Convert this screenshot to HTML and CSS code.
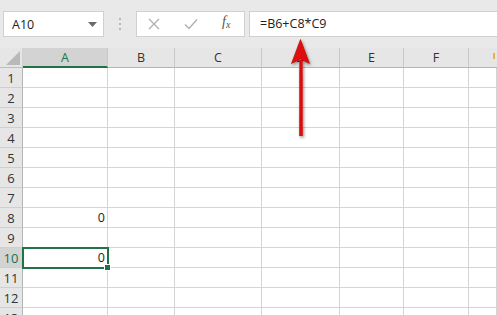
FILE: index.html
```html
<!DOCTYPE html>
<html>
<head>
<meta charset="utf-8">
<link rel="stylesheet" href="styles.css">
</head>
<body>
<div class="app">
  <div class="toolbar">
    <div class="namebox">
      <span class="name">A10</span>
      <svg class="caret" width="9" height="5" viewBox="0 0 9 5"><path d="M0 0H9L4.5 5Z" fill="#6a6a6a"/></svg>
    </div>
    <div class="dots"><i></i><i></i><i></i></div>
    <div class="fxbox">
      <svg class="ico" width="12" height="12" viewBox="0 0 12 12"><path d="M1 1L11 11M11 1L1 11" stroke="#b0b0b0" stroke-width="1.3"/></svg>
      <svg class="ico" width="14" height="12" viewBox="0 0 14 12"><path d="M1 6.5L5 10.5L13 1.5" stroke="#b0b0b0" stroke-width="1.4" fill="none"/></svg>
      <span class="fx">f<sub>x</sub></span>
    </div>
    <div class="formula">=B6+C8*C9</div>
  </div>
  <div class="sheet">
    <div class="corner"><svg width="14" height="14" viewBox="0 0 14 14"><path d="M14 0V14H0Z" fill="#b9b9b9"/></svg></div>
    <div class="ch sel">A</div><div class="ch">B</div><div class="ch">C</div><div class="ch">D</div><div class="ch">E</div><div class="ch">F</div><div class="ch last"><span class="tick"></span></div>

    <div class="rh">1</div><div class="c"></div><div class="c"></div><div class="c"></div><div class="c"></div><div class="c"></div><div class="c"></div><div class="c"></div>
    <div class="rh">2</div><div class="c"></div><div class="c"></div><div class="c"></div><div class="c"></div><div class="c"></div><div class="c"></div><div class="c"></div>
    <div class="rh">3</div><div class="c"></div><div class="c"></div><div class="c"></div><div class="c"></div><div class="c"></div><div class="c"></div><div class="c"></div>
    <div class="rh">4</div><div class="c"></div><div class="c"></div><div class="c"></div><div class="c"></div><div class="c"></div><div class="c"></div><div class="c"></div>
    <div class="rh">5</div><div class="c"></div><div class="c"></div><div class="c"></div><div class="c"></div><div class="c"></div><div class="c"></div><div class="c"></div>
    <div class="rh">6</div><div class="c"></div><div class="c"></div><div class="c"></div><div class="c"></div><div class="c"></div><div class="c"></div><div class="c"></div>
    <div class="rh">7</div><div class="c"></div><div class="c"></div><div class="c"></div><div class="c"></div><div class="c"></div><div class="c"></div><div class="c"></div>
    <div class="rh">8</div><div class="c num">0</div><div class="c"></div><div class="c"></div><div class="c"></div><div class="c"></div><div class="c"></div><div class="c"></div>
    <div class="rh">9</div><div class="c"></div><div class="c"></div><div class="c"></div><div class="c"></div><div class="c"></div><div class="c"></div><div class="c"></div>
    <div class="rh selr">10</div><div class="c num active">0<span class="handle"></span></div><div class="c"></div><div class="c"></div><div class="c"></div><div class="c"></div><div class="c"></div><div class="c"></div>
    <div class="rh">11</div><div class="c"></div><div class="c"></div><div class="c"></div><div class="c"></div><div class="c"></div><div class="c"></div><div class="c"></div>
    <div class="rh">12</div><div class="c"></div><div class="c"></div><div class="c"></div><div class="c"></div><div class="c"></div><div class="c"></div><div class="c"></div>
    <div class="rh">13</div><div class="c"></div><div class="c"></div><div class="c"></div><div class="c"></div><div class="c"></div><div class="c"></div><div class="c"></div>
  </div>
  <svg class="arrow" width="30" height="110" viewBox="0 0 30 110">
    <defs>
      <filter id="sh" x="-50%" y="-20%" width="200%" height="140%">
        <feDropShadow dx="1" dy="1.5" stdDeviation="1.5" flood-color="#000" flood-opacity="0.45"/>
      </filter>
    </defs>
    <g filter="url(#sh)">
      <path d="M13.3 22 L16.7 22 L16.8 98 L13.2 98 Z" fill="#d80c0c"/>
      <path d="M14.5 1.5 L23.5 25.5 L14.5 21 L5.5 25.5 Z" fill="#e01010" stroke="#b50000" stroke-width="0.6"/>
    </g>
  </svg>
</div>
</body>
</html>
```

FILE: styles.css
```css
html, body {
  margin: 0;
  padding: 0;
}
body {
  width: 497px;
  height: 315px;
  overflow: hidden;
  background: #ffffff;
  font-family: "Open Sans", "Noto Sans", sans-serif;
}
.app {
  position: relative;
  width: 497px;
  height: 315px;
  overflow: hidden;
}
.toolbar {
  height: 48px;
  box-sizing: border-box;
  padding-top: 11px;
  background: #e9e9e9;
  display: flex;
  align-items: flex-start;
}
.namebox {
  margin-left: 3px;
  width: 101px;
  height: 26px;
  box-sizing: border-box;
  background: #fff;
  border: 1px solid #d0d0d0;
  display: flex;
  align-items: center;
  justify-content: space-between;
  padding: 0 6px 0 8px;
}
.name {
  font-size: 12.5px;
  color: #222;
}
.caret {
  display: block;
  margin-top: 1px;
}
.dots {
  width: 32px;
  height: 26px;
  display: flex;
  flex-direction: column;
  align-items: center;
  justify-content: center;
  gap: 3px;
}
.dots i {
  display: block;
  width: 2px;
  height: 2px;
  background: #b5b5b5;
}
.fxbox {
  width: 109px;
  height: 26px;
  box-sizing: border-box;
  background: #fff;
  border: 1px solid #d0d0d0;
  display: flex;
  align-items: center;
  padding-left: 11px;
}
.fxbox .ico:first-child {
  margin-right: 24px;
}
.fxbox .ico:nth-child(2) {
  margin-right: 24px;
}
.fx {
  font-family: "Liberation Serif", serif;
  font-style: italic;
  font-size: 14px;
  color: #555;
  line-height: 1;
  margin-top: -3px;
}
.fx sub {
  font-size: 10px;
  vertical-align: -2px;
}
.formula {
  margin-left: 4px;
  flex: 1;
  height: 26px;
  box-sizing: border-box;
  background: #fff;
  border: 1px solid #d0d0d0;
  border-right: none;
  padding-left: 10px;
  font-size: 12.5px;
  line-height: 24px;
  color: #222;
}
.sheet {
  display: grid;
  grid-template-columns: 23px 85px 67px 87px 78px 64px 65px 28px;
  grid-auto-rows: 20px;
  background: #fff;
}
.corner {
  background: #e6e6e6;
  border-right: 1px solid #d0d0d0;
  border-bottom: 1px solid #bdbdbd;
  display: flex;
  align-items: flex-end;
  justify-content: flex-end;
  padding: 0 2px 2px 0;
  box-sizing: border-box;
}
.corner svg {
  display: block;
}
.ch {
  background: #e6e6e6;
  border-right: 1px solid #c8c8c8;
  border-bottom: 1px solid #b5b5b5;
  box-sizing: border-box;
  font-size: 12.5px;
  color: #333;
  display: flex;
  align-items: center;
  justify-content: center;
  position: relative;
}
.ch.sel {
  background: #d3d3d3;
  color: #217346;
  border-bottom: 2px solid #217346;
}
.ch.last {
  border-right: none;
}
.tick {
  position: absolute;
  left: 24px;
  top: 5px;
  width: 2px;
  height: 6px;
  background: #e8b050;
}
.rh {
  background: #e6e6e6;
  border-right: 1px solid #b5b5b5;
  border-bottom: 1px solid #cfcfcf;
  box-sizing: border-box;
  font-size: 13px;
  color: #333;
  display: flex;
  align-items: center;
  justify-content: center;
}
.rh.selr {
  background: #d3d3d3;
  color: #217346;
}
.c {
  border-right: 1px solid #d4d4d4;
  border-bottom: 1px solid #d4d4d4;
  box-sizing: border-box;
  position: relative;
}
.num {
  font-size: 12.5px;
  color: #222;
  text-align: right;
  padding-right: 2px;
  line-height: 19px;
}
.active {
  outline: 2px solid #217346;
  outline-offset: -1px;
  z-index: 1;
}
.handle {
  position: absolute;
  right: -4px;
  bottom: -4px;
  width: 5px;
  height: 5px;
  background: #217346;
  border: 1px solid #fff;
}
.arrow {
  position: absolute;
  left: 286px;
  top: 38px;
  overflow: visible;
}
```
